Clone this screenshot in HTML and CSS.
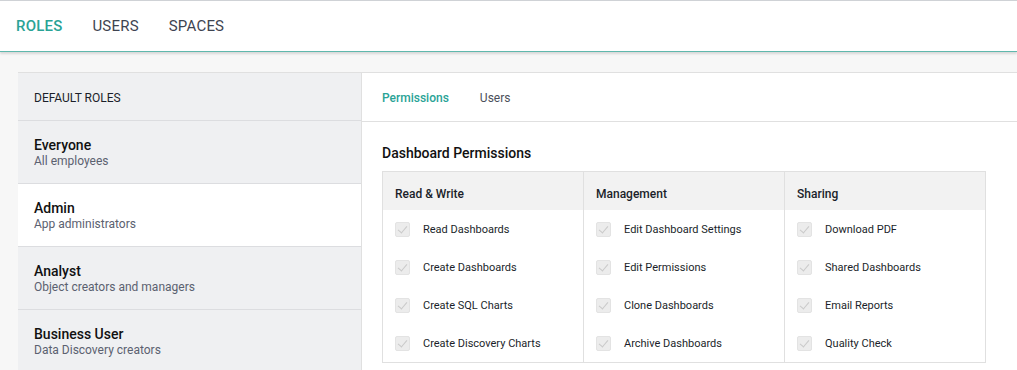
FILE: index.html
```html
<!DOCTYPE html>
<html lang="en">
<head>
  <meta charset="UTF-8" />
  <title>Roles | Admin</title>
  <link rel="stylesheet" href="styles.css">
</head>
<body>

  <header class="top-nav">
    <a class="nav-item active" href="#">ROLES</a>
    <a class="nav-item" href="#">USERS</a>
    <a class="nav-item" href="#">SPACES</a>
  </header>

  <main class="page">
    <div class="roles-card">
      <aside class="role-list">
        <div class="role-list-title">DEFAULT ROLES</div>
        <div class="role">
          <div class="role-name">Everyone</div>
          <div class="role-desc">All employees</div>
        </div>
        <div class="role selected">
          <div class="role-name">Admin</div>
          <div class="role-desc">App administrators</div>
        </div>
        <div class="role">
          <div class="role-name">Analyst</div>
          <div class="role-desc">Object creators and managers</div>
        </div>
        <div class="role">
          <div class="role-name">Business User</div>
          <div class="role-desc">Data Discovery creators</div>
        </div>
      </aside>

      <section class="role-detail">
        <div class="tabs">
          <a class="tab active" href="#">Permissions</a>
          <a class="tab" href="#">Users</a>
        </div>

        <div class="detail-body">
          <h3>Dashboard Permissions</h3>
          <div class="perm-table">
            <div class="perm-col">
              <div class="perm-head">Read &amp; Write</div>
              <label class="perm"><span class="check"></span>Read Dashboards</label>
              <label class="perm"><span class="check"></span>Create Dashboards</label>
              <label class="perm"><span class="check"></span>Create SQL Charts</label>
              <label class="perm"><span class="check"></span>Create Discovery Charts</label>
            </div>
            <div class="perm-col">
              <div class="perm-head">Management</div>
              <label class="perm"><span class="check"></span>Edit Dashboard Settings</label>
              <label class="perm"><span class="check"></span>Edit Permissions</label>
              <label class="perm"><span class="check"></span>Clone Dashboards</label>
              <label class="perm"><span class="check"></span>Archive Dashboards</label>
            </div>
            <div class="perm-col">
              <div class="perm-head">Sharing</div>
              <label class="perm"><span class="check"></span>Download PDF</label>
              <label class="perm"><span class="check"></span>Shared Dashboards</label>
              <label class="perm"><span class="check"></span>Email Reports</label>
              <label class="perm"><span class="check"></span>Quality Check</label>
            </div>
          </div>
        </div>
      </section>
    </div>
  </main>

</body>
</html>
```

FILE: styles.css
```css
body {
  margin: 0;
  padding: 0;
  font-family: 'Roboto', 'Liberation Sans', sans-serif;
  background-color: #f7f7f7;
  color: #1b1f2a;
  height: 370px;
  overflow: hidden;
}

a {
  text-decoration: none;
}

.top-nav {
  display: flex;
  align-items: center;
  gap: 30px;
  height: 50px;
  padding: 0 16px;
  background: white;
  border-top: 1px solid #cfd2d6;
  border-bottom: 1px solid #5fb8ad;
  box-shadow: 0 2px 2px rgba(0,0,0,0.12);
}

.nav-item {
  font-size: 15px;
  color: #3e4451;
  letter-spacing: 0.2px;
}

.nav-item.active {
  color: #2aa396;
  font-weight: 500;
}

.page {
  padding: 20px 0 0 18px;
}

.roles-card {
  display: flex;
  border-top: 1px solid #e0e0e0;
  background: white;
}

.role-list {
  width: 343px;
  flex-shrink: 0;
  background: #eff0f2;
  border-right: 1px solid #e0e0e0;
}

.role-list-title {
  height: 48px;
  box-sizing: border-box;
  display: flex;
  align-items: center;
  padding: 2px 0 0 16px;
  font-size: 12px;
  border-bottom: 1px solid #dcdde0;
}

.role {
  height: 63px;
  padding: 16px 16px 0;
  box-sizing: border-box;
  border-bottom: 1px solid #dcdde0;
}

.role.selected {
  background: white;
}

.role-name {
  font-size: 14px;
  font-weight: 500;
  color: #111;
}

.role-desc {
  font-size: 12px;
  color: #5b6170;
  margin-top: 1px;
}

.role-detail {
  flex: 1;
}

.tabs {
  display: flex;
  gap: 31px;
  height: 49px;
  box-sizing: border-box;
  align-items: center;
  padding: 1px 0 0 20px;
  border-bottom: 1px solid #e0e0e0;
}

.tab {
  font-size: 12px;
  color: #4b4f5a;
}

.tab.active {
  color: #2aa396;
  font-weight: 500;
}

.detail-body {
  padding: 23px 0 0 20px;
}

.detail-body h3 {
  margin: 0 0 10px;
  font-size: 14px;
  font-weight: 500;
  color: #111;
}

.perm-table {
  display: flex;
  width: 604px;
  box-sizing: border-box;
  border: 1px solid #e0e0e0;
}

.perm-col {
  flex: 1;
  border-left: 1px solid #e0e0e0;
}

.perm-col:first-child {
  border-left: none;
}

.perm-head {
  height: 38px;
  box-sizing: border-box;
  display: flex;
  align-items: center;
  padding: 5px 0 0 12px;
  background: #f2f2f2;
  font-size: 12px;
  font-weight: 500;
}

.perm {
  display: flex;
  align-items: center;
  height: 38px;
  padding-left: 12px;
  font-size: 11px;
  color: #1b1f2a;
}

.check {
  position: relative;
  width: 13px;
  height: 13px;
  margin-right: 13px;
  background: #ececec;
  border: 1px solid #e3e3e3;
  border-radius: 2px;
}

.check::after {
  content: "";
  position: absolute;
  left: 4px;
  top: 1px;
  width: 4px;
  height: 8px;
  border: solid #c9c9c9;
  border-width: 0 1px 1px 0;
  transform: rotate(40deg);
}
```
